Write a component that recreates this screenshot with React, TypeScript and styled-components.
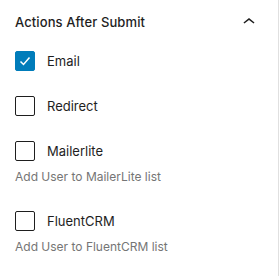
import styled, { createGlobalStyle } from 'styled-components';

const GlobalStyle = createGlobalStyle`
  html, body { margin: 0; padding: 0; background: #fff; }
  body { font-family: Inter, "Liberation Sans", sans-serif; color: #1e1e1e; }
`;

const Panel = styled.div`
  width: 278px;
  height: 276px;
  border-right: 1px solid #e0e0e0;
  background: #fff;
`;

const Header = styled.div`
  display: flex;
  align-items: center;
  justify-content: space-between;
  height: 44px;
  padding: 0 17px 0 15px;
  box-sizing: border-box;
`;

const Title = styled.span`
  font-size: 13px;
  font-weight: 500;
  letter-spacing: 0.1px;
`;

const Toggle = styled.svg`
  width: 24px;
  height: 24px;
  fill: #1e1e1e;
`;

const Body = styled.div`
  display: flex;
  flex-direction: column;
  gap: 25px;
  padding: 7px 15px 0;
`;

const Field = styled.div`
  display: flex;
  flex-direction: column;
  gap: 7px;
`;

const Row = styled.label`
  display: flex;
  align-items: center;
  gap: 12px;
  height: 20px;
`;

const Box = styled.span<{ $checked?: boolean }>`
  width: 20px;
  height: 20px;
  box-sizing: border-box;
  border-radius: 2px;
  border: 1px solid ${(p) => (p.$checked ? '#007cba' : '#1e1e1e')};
  background: ${(p) => (p.$checked ? '#007cba' : '#fff')};
  display: flex;
  align-items: center;
  justify-content: center;
`;

const Label = styled.span`
  font-size: 13px;
`;

const Help = styled.div`
  font-size: 12px;
  color: #757575;
  line-height: 18px;
`;

const items = [
  { label: 'Email', checked: true },
  { label: 'Redirect' },
  { label: 'Mailerlite', help: 'Add User to MailerLite list' },
  { label: 'FluentCRM', help: 'Add User to FluentCRM list' },
];

export default function App() {
  return (
    <>
      <GlobalStyle />
      <Panel>
        <Header>
          <Title>Actions After Submit</Title>
          <Toggle viewBox="0 0 24 24">
            <path d="M6.5 12.4L12 8l5.5 4.4-.9 1.2L12 10l-4.6 3.6-1-1.2z" />
          </Toggle>
        </Header>
        <Body>
          {items.map((item) => (
            <Field key={item.label}>
              <Row>
                <Box $checked={item.checked}>
                  {item.checked && (
                    <svg width="14" height="14" viewBox="0 0 14 14">
                      <path d="M2.5 7.5l3 3 6-7" stroke="#fff" strokeWidth="1.5" fill="none" />
                    </svg>
                  )}
                </Box>
                <Label>{item.label}</Label>
              </Row>
              {item.help && <Help>{item.help}</Help>}
            </Field>
          ))}
        </Body>
      </Panel>
    </>
  );
}
